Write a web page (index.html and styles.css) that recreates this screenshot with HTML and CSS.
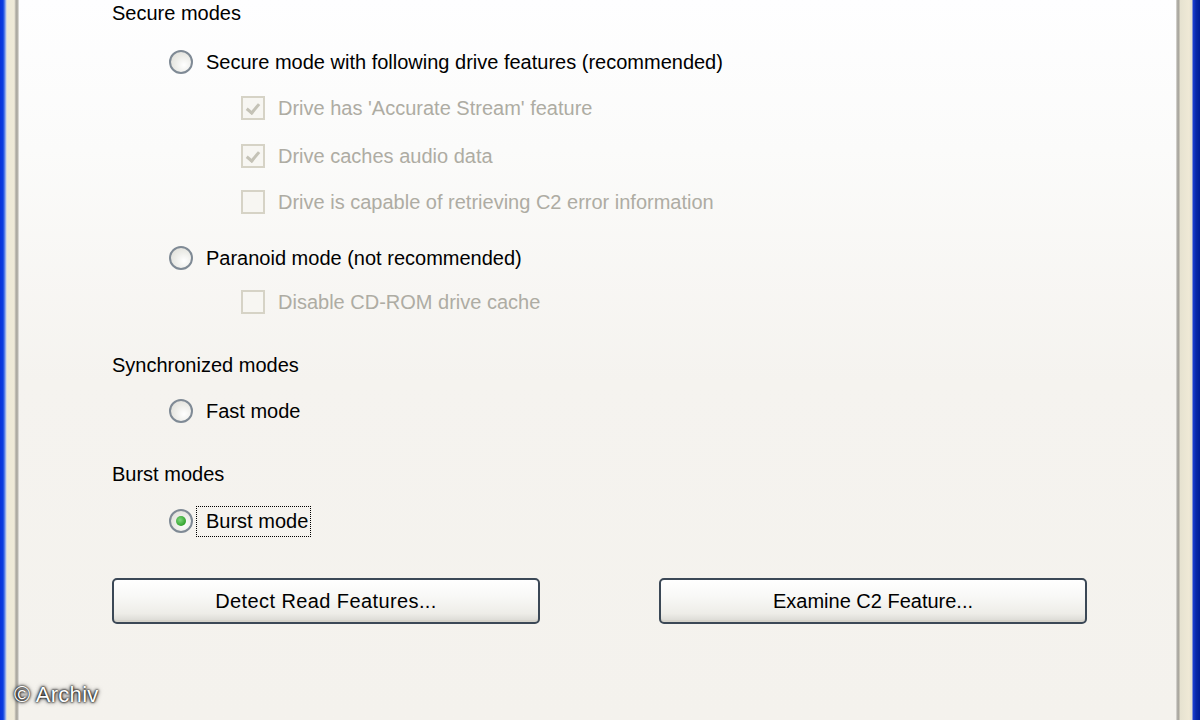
FILE: index.html
```html
<!DOCTYPE html>
<html>
<head>
<meta charset="utf-8">
<link rel="stylesheet" href="styles.css">
</head>
<body>
<div class="window">
  <div class="edge edge-left"></div>
  <div class="page">
    <div class="row title t-secure">Secure modes</div>
    <div class="row radio-row r-secure"><span class="radio"></span><span class="label">Secure mode with following drive features (recommended)</span></div>
    <div class="row check-row c1"><span class="check checked"></span><span class="label dis">Drive has 'Accurate Stream' feature</span></div>
    <div class="row check-row c2"><span class="check checked"></span><span class="label dis">Drive caches audio data</span></div>
    <div class="row check-row c3"><span class="check"></span><span class="label dis">Drive is capable of retrieving C2 error information</span></div>
    <div class="row radio-row r-paranoid"><span class="radio"></span><span class="label">Paranoid mode (not recommended)</span></div>
    <div class="row check-row c4"><span class="check"></span><span class="label dis">Disable CD-ROM drive cache</span></div>
    <div class="row title t-sync">Synchronized modes</div>
    <div class="row radio-row r-fast"><span class="radio"></span><span class="label">Fast mode</span></div>
    <div class="row title t-burst">Burst modes</div>
    <div class="row radio-row r-burst"><span class="radio on"></span><span class="label focus">Burst mode</span></div>
    <div class="buttons">
      <button class="btn btn-detect">Detect Read Features...</button>
      <button class="btn">Examine C2 Feature...</button>
    </div>
    <div class="copyright">© Archiv</div>
  </div>
  <div class="edge edge-right"></div>
</div>
</body>
</html>
```
FILE: styles.css
```css
html, body {
  margin: 0;
  padding: 0;
}
body {
  width: 1200px;
  height: 720px;
  overflow: hidden;
  font-family: "Liberation Sans", Arial, sans-serif;
  font-size: 20px;
  color: #000;
}
.window {
  display: flex;
  height: 720px;
}
.edge {
  width: 19px;
  flex: none;
}
.edge-left {
  background: linear-gradient(to right, #0831d9 0, #0a3de0 3px, #6d8fe8 5px, #b9c9ef 6px, #ece8d6 7px, #efead8 14px, #d8d4c8 15px, #a9a69d 16px, #b7b5ae 18px, #f7f6f3 19px);
}
.edge-right {
  width: 24px;
  background: linear-gradient(to right, #eceae6 0, #b2b0aa 1px, #a8a59c 3px, #e6e2d0 4px, #efe9d6 13px, #e4e0cf 16px, #1c3fd4 17px, #0a2aa8 20px, #001c98 24px);
}
.page {
  flex: 1;
  position: relative;
  display: flex;
  flex-direction: column;
  padding-left: 93px;
  background: linear-gradient(to bottom, #fefeff 0, #fbfbfa 150px, #f5f3ef 380px, #f4f2ed 720px);
}
.row {
  display: flex;
  align-items: center;
  height: 30px;
  flex: none;
}
.title { color: #000; }
.t-secure { height: 26px; }
.r-secure { margin-top: 21px; }
.c1 { margin-top: 16px; }
.c2 { margin-top: 18px; }
.c3 { margin-top: 16px; }
.r-paranoid { margin-top: 26px; }
.c4 { margin-top: 14px; }
.t-sync { margin-top: 33px; }
.r-fast { margin-top: 16px; }
.t-burst { margin-top: 33px; }
.r-burst { margin-top: 17px; }

.radio-row { margin-left: 57px; }
.check-row { margin-left: 129px; }

.radio {
  width: 24px;
  height: 24px;
  border-radius: 50%;
  border: 2px solid #7f8a95;
  background: radial-gradient(circle at 65% 65%, #ffffff 0, #eeeeea 45%, #dcdbd4 100%);
  box-sizing: border-box;
  margin-right: 13px;
  flex: none;
  display: flex;
  align-items: center;
  justify-content: center;
}
.radio.on::after {
  content: "";
  width: 10px;
  height: 10px;
  border-radius: 50%;
  background: radial-gradient(circle at 40% 40%, #7fd67c 0, #32a42e 70%, #2a8f27 100%);
}
.check {
  width: 24px;
  height: 24px;
  box-sizing: border-box;
  border: 2px solid #d6d3c6;
  background: #f7f6f2;
  margin-right: 13px;
  flex: none;
  position: relative;
}
.check.checked::after {
  content: "";
  position: absolute;
  left: 6px;
  top: 3px;
  width: 5px;
  height: 10px;
  border-right: 3px solid #c4c2b6;
  border-bottom: 3px solid #c4c2b6;
  transform: rotate(40deg);
}
.label { white-space: nowrap; }
.label.dis { color: #aeaca3; }
.label.focus {
  outline: 1px dotted #000;
  outline-offset: 0;
  padding: 3px 2px 3px 9px;
  margin-left: -9px;
}
.buttons {
  display: flex;
  gap: 119px;
  margin-top: 42px;
}
.btn {
  width: 428px;
  height: 46px;
  border: 2px solid #3b4856;
  border-radius: 5px;
  background: linear-gradient(to bottom, #ffffff 0, #f8f8f6 40%, #eeede8 80%, #d9d8d2 100%);
  font-family: "Liberation Sans", Arial, sans-serif;
  font-size: 20px;
  color: #000;
  padding: 0;
  box-shadow: inset 0 -2px 0 #d6d4cc;
}
.btn-detect { letter-spacing: 0.4px; }
.copyright {
  position: absolute;
  left: -5px;
  top: 682px;
  color: #fff;
  font-size: 22px;
  letter-spacing: 0.3px;
  text-shadow: 0 0 2px #000, 0 0 3px #000, 0 0 5px #444;
}
```
